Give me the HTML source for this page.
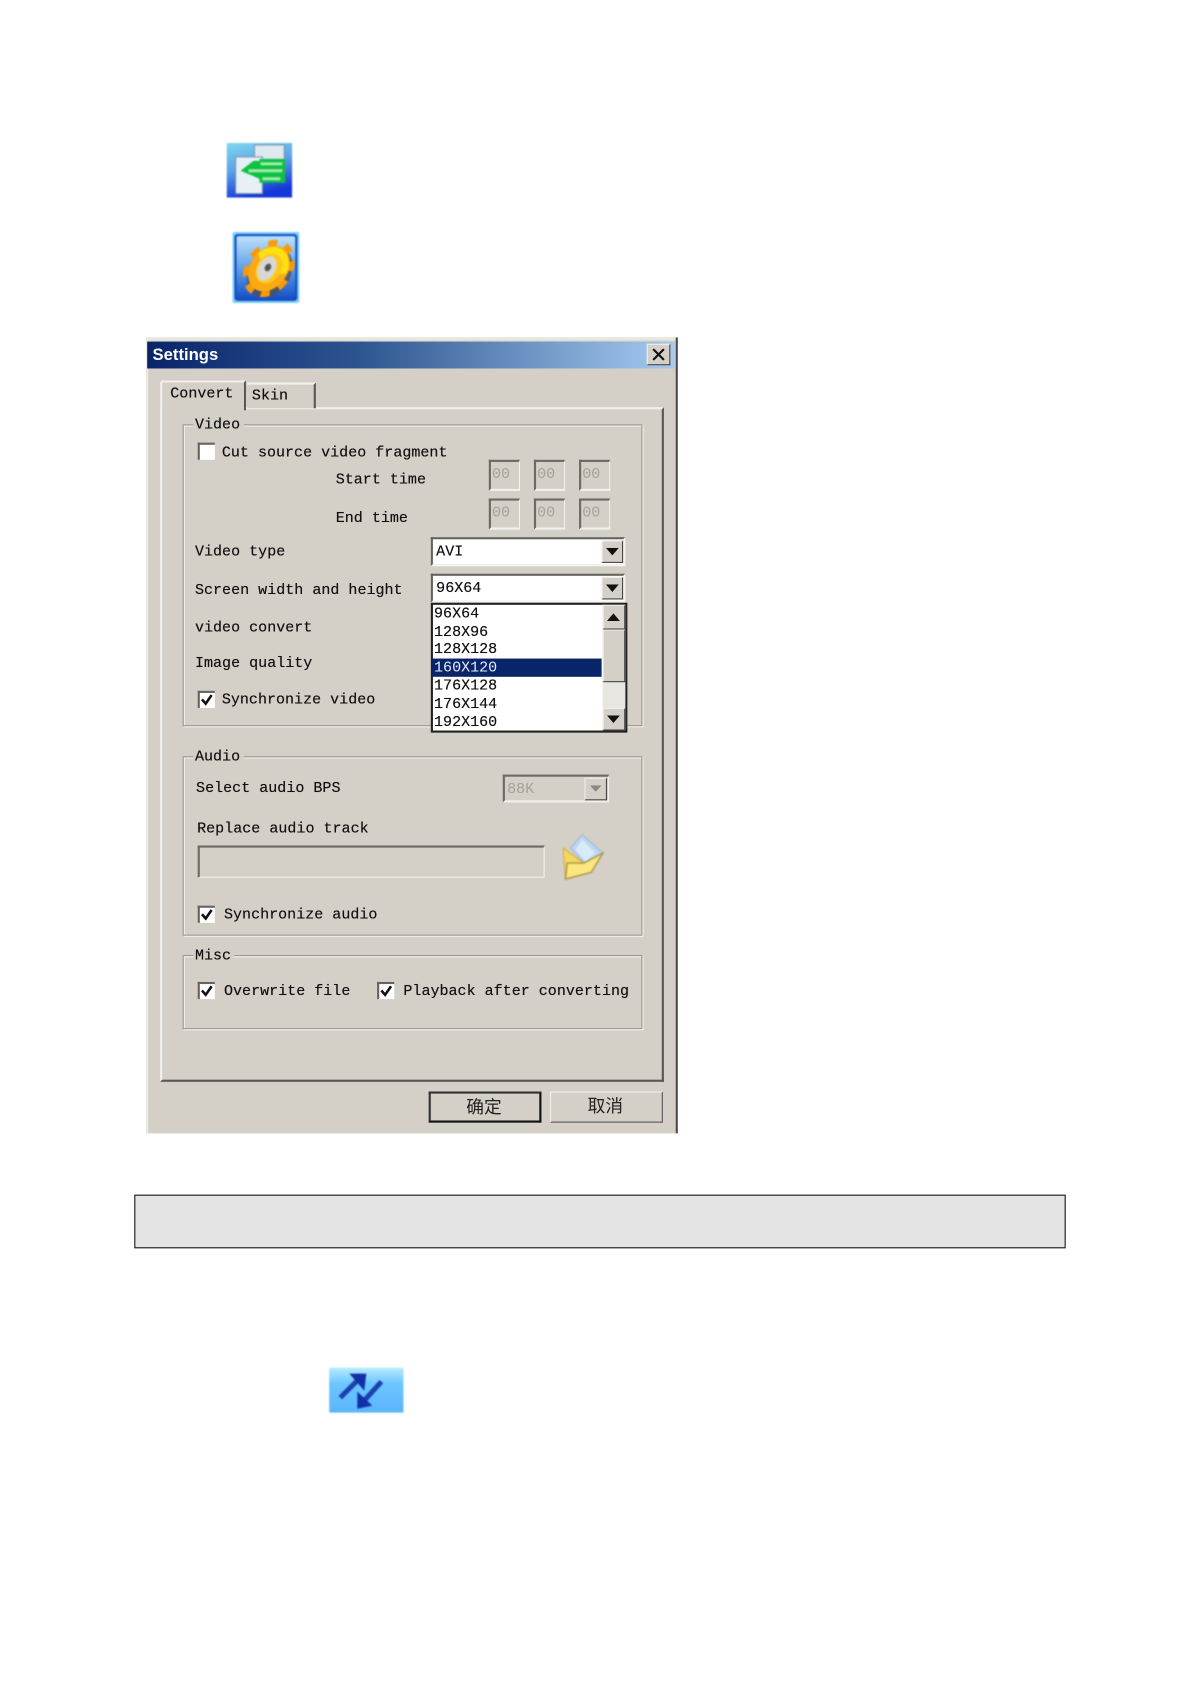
<!DOCTYPE html>
<html><head><meta charset="utf-8"><title>Settings</title>
<style>
html,body{margin:0;padding:0;width:1190px;height:1684px;overflow:hidden;background:#fff}
#w{position:absolute;left:0;top:0;width:1108px;height:1568px;transform:scale(1.0743);transform-origin:0 0;background:#fff}
#w div,#w svg{position:absolute}
#d{left:0;top:0;width:1108px;height:1568px;filter:blur(.35px)}
.t{font:14px/16px "Liberation Mono","Noto Sans CJK SC",monospace;color:#111;white-space:pre;text-shadow:0 0 .4px #333;margin:1px 0 0 .5px}
.g{border:1px solid #98958d;box-shadow:1px 1px 0 #f6f5f0,inset 1px 1px 0 #f6f5f0}
.l{background:#d4d0c8;padding:0 3px 0 2px;font:14px/16px "Liberation Mono",monospace;color:#111;text-shadow:0 0 .4px #333;margin:1px 0 0 .5px}
.s{background:#d4d0c8;border:1px solid;border-color:#6d6a64 #f2f0ea #f2f0ea #6d6a64;border-width:2px 1px 2px 2px;box-sizing:border-box;font:14px/24px "Liberation Mono",monospace;color:#a5a29a;padding-left:1px}
.c{width:16px;height:16px;background:#fff;border-top:2px solid #66635e;border-left:2px solid #66635e;box-sizing:border-box}
.cb{background:#fff;border:2px solid;border-color:#66635e #f4f2ec #f4f2ec #66635e;box-sizing:border-box;font:14px/25px "Liberation Mono",monospace;color:#111;padding-left:3px;text-shadow:0 0 .4px #333}
.b{background:#d4d0c8;border:1px solid;border-color:#eee #444 #444 #eee;box-sizing:border-box}
.i{font:14px/17px "Liberation Mono",monospace;color:#111;left:404px;text-shadow:0 0 .4px #333;margin-top:1px}
.ic{filter:blur(.7px)}
</style></head><body><div id="w"><div id="d">

<svg class="ic" style="left:211px;top:133px" width="61" height="51" viewBox="0 0 66 55">
<defs><linearGradient id="a" x1="0" y1="0" x2=".3" y2="1"><stop offset="0" stop-color="#7fd8ee"/><stop offset=".5" stop-color="#5aa2e8"/><stop offset="1" stop-color="#1438d8"/></linearGradient>
<linearGradient id="b" x1="0" y1="0" x2="0" y2="1"><stop offset="0" stop-color="#bce2fa"/><stop offset=".55" stop-color="#5a9ae8"/><stop offset="1" stop-color="#1450c4"/></linearGradient>
<linearGradient id="c" x1="0" y1="0" x2="0" y2="1"><stop offset="0" stop-color="#b8ecff"/><stop offset=".35" stop-color="#6cc6ff"/><stop offset="1" stop-color="#5ab4fb"/></linearGradient></defs>
<rect width="66" height="55" fill="url(#a)"/>
<rect x="28" y="2" width="30" height="34" fill="#dfeaf0" stroke="#7a8fa8"/>
<rect x="9" y="14" width="27" height="37" fill="#e6f0f6" stroke="#7a8fa8"/>
<path d="M33 16H59V40H33V36L14 28L27 18H33Z" fill="#10c040"/>
<path d="M34 21H56M22 28H56M36 36H54" stroke="#a0eeb0" stroke-width="3"/>
</svg>

<svg class="ic" style="left:216px;top:216px" width="63" height="66" viewBox="0 0 66 70">
<rect width="66" height="70" rx="2" fill="#78d0fa"/>
<rect x="2" y="2" width="62" height="66" rx="3" fill="#1648c0"/>
<rect x="4" y="4" width="58" height="62" rx="2" fill="url(#b)"/>
<g transform="translate(36 36) rotate(35) scale(.92 1.22)">
<circle r="22" cx="3" cy="2" fill="#5b4a3c" opacity=".7"/>
<circle r="21.500" fill="none" stroke="#f69a0c" stroke-width="7" stroke-dasharray="8.440 8.440"/>
<circle r="20" fill="#fba912"/>
<path d="M-19-5A20 20 0 0 1 19-5L10 0H-10Z" fill="#ffe010"/>
<circle r="13" fill="#ffc818"/>
</g>
<ellipse cx="34" cy="36" rx="8.500" ry="13" transform="rotate(28 34 36)" fill="#d8d8d2"/>
<ellipse cx="35" cy="35" rx="3" ry="4" transform="rotate(28 35 35)" fill="#555"/>
</svg>

<!-- dialog -->
<div style="left:136px;top:314px;width:495px;height:741px;background:#d4d0c8;overflow:hidden">
 <div style="left:0;top:0;width:495px;height:3px;background:#e8e6e0"></div>
 <div style="left:0;top:0;width:2px;height:741px;background:#eceae5"></div>
 <div style="right:0;top:0;width:2px;height:741px;background:#4a4a48"></div>
 <div style="left:1px;top:4px;width:491px;height:25px;background:linear-gradient(90deg,#0a246a,#2c5590 40%,#a6caf0)"></div>
 <div style="left:6px;top:7px;font:bold 15.500px/19px 'Liberation Sans',sans-serif;color:#fff">Settings</div>
 <div class="b" style="left:466px;top:6px;width:22px;height:20px"></div>
 <svg style="left:470px;top:9px" width="14" height="14" viewBox="0 0 14 14"><path d="M2 2L12 12M12 2L2 12" stroke="#111" stroke-width="2"/></svg>
</div>

<!-- panel -->
<div style="left:149px;top:379px;width:469px;height:628px;box-sizing:border-box;border-top:2px solid #f2f0ea;border-left:2px solid #f2f0ea;border-right:2px solid #5a5853;border-bottom:2px solid #5a5853;background:#d4d0c8"></div>
<div style="left:149px;top:354px;width:80px;height:28px;box-sizing:border-box;background:#d4d0c8;border-top:2px solid #f2f0ea;border-left:2px solid #f2f0ea;border-right:2px solid #5a5853;border-radius:3px 0 0 0"></div>
<div style="left:230px;top:356px;width:64px;height:24px;box-sizing:border-box;background:#d4d0c8;border-top:2px solid #f2f0ea;border-right:2px solid #5a5853"></div>
<div class="t" style="left:158px;top:358px">Convert</div>
<div class="t" style="left:234px;top:360px">Skin</div>

<!-- video group -->
<div class="g" style="left:170px;top:395px;width:426px;height:279px"></div>
<div class="l" style="left:179px;top:387px">Video</div>
<div class="c" style="left:184px;top:412px"></div>
<div class="t" style="left:206px;top:413px">Cut source video fragment</div>
<div class="t" style="left:312px;top:438px">Start time</div>
<div class="t" style="left:312px;top:474px">End time</div>
<div class="s" style="left:455px;top:428px;width:29px;height:29px">00</div>
<div class="s" style="left:497px;top:428px;width:29px;height:29px">00</div>
<div class="s" style="left:539px;top:428px;width:29px;height:29px">00</div>
<div class="s" style="left:455px;top:464px;width:29px;height:29px">00</div>
<div class="s" style="left:497px;top:464px;width:29px;height:29px">00</div>
<div class="s" style="left:539px;top:464px;width:29px;height:29px">00</div>
<div class="t" style="left:181px;top:505px">Video type</div>
<div class="cb" style="left:401px;top:500px;width:181px;height:27px">AVI</div>
<div class="b" style="left:560px;top:503px;width:20px;height:21px"></div>
<svg style="left:564px;top:510px" width="12" height="7"><path d="M0 0H12L6 7Z" fill="#111"/></svg>
<div class="t" style="left:181px;top:541px">Screen width and height</div>
<div class="cb" style="left:401px;top:534px;width:181px;height:27px">96X64</div>
<div class="b" style="left:560px;top:537px;width:20px;height:21px"></div>
<svg style="left:564px;top:544px" width="12" height="7"><path d="M0 0H12L6 7Z" fill="#111"/></svg>
<div class="t" style="left:181px;top:576px">video convert</div>
<div class="t" style="left:181px;top:609px">Image quality</div>
<div class="c" style="left:184px;top:643px"></div>
<svg style="left:186px;top:645px" width="13" height="13"><path d="M2 6L5.500 10L11 2" fill="none" stroke="#111" stroke-width="2.400"/></svg>
<div class="t" style="left:206px;top:643px">Synchronize video</div>

<!-- dropdown -->
<div style="left:401px;top:561px;width:183px;height:121px;box-sizing:border-box;border:2px solid #222;background:#fff"></div>
<div class="i" style="top:563px">96X64</div>
<div class="i" style="top:580px">128X96</div>
<div class="i" style="top:596px">128X128</div>
<div style="left:402px;top:613px;width:158px;height:17px;background:#0a246a"></div>
<div class="i" style="top:613px;color:#e6ecff;text-shadow:none">160X120</div>
<div class="i" style="top:630px">176X128</div>
<div class="i" style="top:647px">176X144</div>
<div class="i" style="top:664px">192X160</div>
<div style="left:561px;top:586px;width:21px;height:73px;background:#e8e6e1"></div>
<div class="b" style="left:561px;top:563px;width:21px;height:23px"></div>
<svg style="left:565px;top:571px" width="12" height="7"><path d="M0 7H12L6 0Z" fill="#111"/></svg>
<div class="b" style="left:561px;top:586px;width:21px;height:49px"></div>
<div class="b" style="left:561px;top:659px;width:21px;height:21px"></div>
<svg style="left:565px;top:666px" width="12" height="7"><path d="M0 0H12L6 7Z" fill="#111"/></svg>

<!-- audio group -->
<div class="g" style="left:170px;top:704px;width:426px;height:165px"></div>
<div class="l" style="left:179px;top:696px">Audio</div>
<div class="t" style="left:182px;top:725px">Select audio BPS</div>
<div class="s" style="left:468px;top:721px;width:99px;height:26px;padding-left:2px;line-height:25px">88K</div>
<div class="b" style="left:544px;top:724px;width:21px;height:21px"></div>
<svg style="left:549px;top:731px" width="11" height="6"><path d="M0 0H11L5.500 6Z" fill="#888"/></svg>
<div class="t" style="left:183px;top:763px">Replace audio track</div>
<div class="s" style="left:184px;top:787px;width:323px;height:30px;border-width:2px 1px 1px 2px"></div>
<svg class="ic" style="left:502.600px;top:763.300px" width="84" height="74.500" viewBox="0 0 270 240">
<path d="M125 45L187 100L140 140L90 85Z" fill="#bcd6f2" stroke="#9fb4cc" stroke-width="3"/>
<path d="M125 60L165 100L135 125L105 90Z" fill="#d8ecf8"/>
<path d="M68 85L95 105L130 130L140 128L150 158L75 178Z" fill="#f6d860" stroke="#cfae40" stroke-width="3"/>
<path d="M80 130L130 130L187 100L152 158L75 178Z" fill="#fbe780" stroke="#a89040" stroke-width="4"/>
</svg>
<div class="c" style="left:184px;top:843px"></div>
<svg style="left:186px;top:845px" width="13" height="13"><path d="M2 6L5.500 10L11 2" fill="none" stroke="#111" stroke-width="2.400"/></svg>
<div class="t" style="left:208px;top:843px">Synchronize audio</div>

<!-- misc group -->
<div class="g" style="left:170px;top:889px;width:426px;height:67px"></div>
<div class="l" style="left:179px;top:881px">Misc</div>
<div class="c" style="left:184px;top:914px"></div>
<svg style="left:186px;top:916px" width="13" height="13"><path d="M2 6L5.500 10L11 2" fill="none" stroke="#111" stroke-width="2.400"/></svg>
<div class="t" style="left:208px;top:914px">Overwrite file</div>
<div class="c" style="left:351px;top:914px"></div>
<svg style="left:353px;top:916px" width="13" height="13"><path d="M2 6L5.500 10L11 2" fill="none" stroke="#111" stroke-width="2.400"/></svg>
<div class="t" style="left:375px;top:914px">Playback after converting</div>

<!-- buttons -->
<div style="left:399px;top:1016px;width:105px;height:29px;box-sizing:border-box;border:2px solid;border-color:#333 #111 #111 #333;background:#d4d0c8;text-align:center;font:16.500px/22px 'Noto Sans CJK SC',sans-serif;color:#222;padding-right:2px">确定</div>
<div style="left:512px;top:1016px;width:105px;height:29px;box-sizing:border-box;border:1px solid;border-color:#f2f0ea #555 #555 #f2f0ea;background:#d4d0c8;text-align:center;font:16.500px/23px 'Noto Sans CJK SC',sans-serif;color:#222;padding-right:2px">取消</div>

<!-- grey box -->
<div style="left:125px;top:1112px;width:867px;height:50px;box-sizing:border-box;border:1px solid #111;background:#e4e4e4"></div>

<svg class="ic" style="left:306px;top:1273px" width="70" height="42" viewBox="0 0 74 45">
<rect width="74" height="45" fill="url(#c)"/>
<path d="M11 30L30 11M52 14L33 35" stroke="#1c3fae" stroke-width="5" fill="none"/>
<path d="M20 6H37L35 23Z" fill="#1030a8"/>
<path d="M28 24V41L43 38Z" fill="#1030a8"/>
</svg>

</div></div></body></html>
